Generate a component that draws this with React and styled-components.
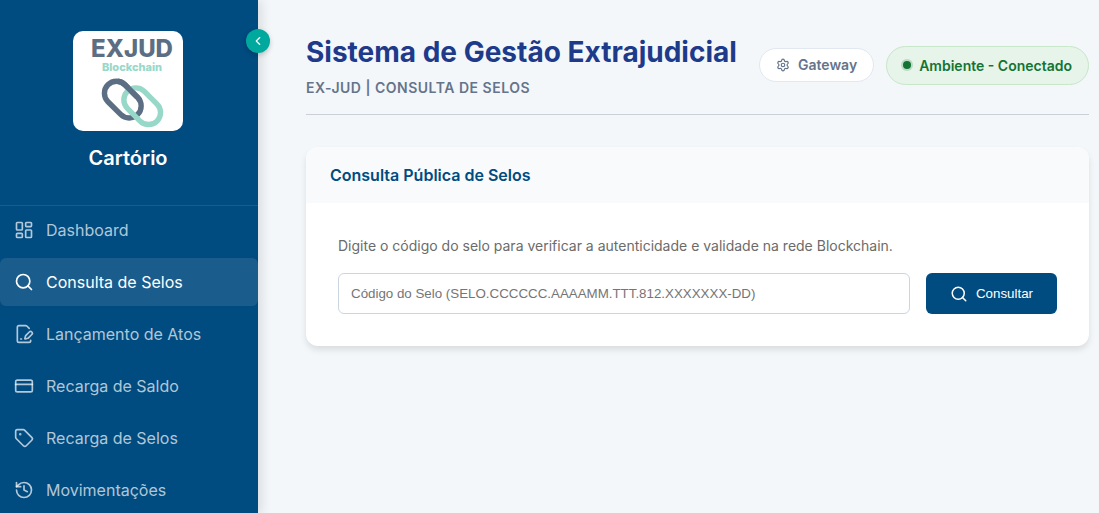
import React from 'react';
import styled, { createGlobalStyle } from 'styled-components';
import {
  LayoutDashboard,
  Search,
  FilePenLine,
  CreditCard,
  Tag,
  History,
  ChevronLeft,
  Settings,
} from 'lucide-react';

const GlobalStyle = createGlobalStyle`
  *, *::before, *::after { box-sizing: border-box; }
  body {
    margin: 0;
    background: #f3f7fa;
    font-family: Inter, "Liberation Sans", sans-serif;
  }
`;

const Shell = styled.div`
  display: flex;
  min-height: 100vh;
`;

const Sidebar = styled.aside`
  position: relative;
  flex: 0 0 258px;
  background: #004b80;
  box-shadow: 4px 0 10px rgba(0, 0, 0, 0.1);
`;

const Brand = styled.div`
  display: flex;
  flex-direction: column;
  align-items: center;
  gap: 12px;
  padding: 31px 18px 32px 16px;
  border-bottom: 1px solid rgba(255, 255, 255, 0.1);
`;

const Logo = styled.svg`
  width: 110px;
  height: 100px;
  border-radius: 10px;
  background: #fff;
`;

const BrandName = styled.h2`
  margin: 0;
  color: #fff;
  font-size: 20px;
  font-weight: 600;
  line-height: 30px;
`;

const CollapseButton = styled.button`
  position: absolute;
  top: 29px;
  right: -12px;
  display: flex;
  align-items: center;
  justify-content: center;
  width: 24px;
  height: 24px;
  padding: 0;
  border: 0;
  border-radius: 50%;
  background: #00a99d;
  color: #fff;
  box-shadow: 0 2px 5px rgba(0, 0, 0, 0.2);
  cursor: pointer;
`;

const Nav = styled.nav`
  display: flex;
  flex-direction: column;
  gap: 4px;
`;

const NavLink = styled.a`
  display: flex;
  align-items: center;
  gap: 12px;
  height: 48px;
  padding: 0 14px;
  border-radius: 6px;
  background: ${({ $active }) => ($active ? 'rgba(255, 255, 255, 0.1)' : 'transparent')};
  color: ${({ $active }) => ($active ? '#fff' : 'rgba(255, 255, 255, 0.7)')};
  font-size: 16px;
  line-height: 24px;
  text-decoration: none;
`;

const Main = styled.main`
  flex: 1;
  min-width: 0;
  padding: 32px 10px 32px 48px;
`;

const Header = styled.header`
  display: flex;
  align-items: center;
  justify-content: space-between;
  gap: 16px;
  margin-bottom: 32px;
  padding-bottom: 16px;
  border-bottom: 1px solid #cbd0d8;
`;

const Title = styled.h1`
  margin: 0;
  color: #1e3a8a;
  font-size: 28px;
  font-weight: 700;
  line-height: 40px;
`;

const Subtitle = styled.p`
  margin: 6px 0 0;
  color: #64748b;
  font-size: 14px;
  font-weight: 600;
  line-height: 20px;
  letter-spacing: 0.5px;
  text-transform: uppercase;
`;

const Actions = styled.div`
  display: flex;
  align-items: center;
  gap: 12px;
`;

const GatewayButton = styled.button`
  display: flex;
  align-items: center;
  gap: 8px;
  height: 34px;
  padding: 0 16px;
  border: 1px solid #e2e8f0;
  border-radius: 17px;
  background: #fff;
  color: #64748b;
  font: 600 14px/20px Inter, sans-serif;
  cursor: pointer;
`;

const Status = styled.div`
  display: flex;
  align-items: center;
  gap: 8px;
  height: 39px;
  padding: 0 16px;
  border: 1px solid #c8e6c9;
  border-radius: 20px;
  background: #e6f4ea;
  color: #137333;
  font-size: 14px;
  font-weight: 600;
  white-space: nowrap;
`;

const Dot = styled.span`
  width: 8px;
  height: 8px;
  border-radius: 50%;
  background: #137333;
  box-shadow: 0 0 0 2px rgba(19, 115, 51, 0.2);
`;

const Card = styled.section`
  overflow: hidden;
  border-radius: 12px;
  background: #fff;
  box-shadow: 0 4px 6px rgba(0, 0, 0, 0.1);
`;

const CardTitle = styled.h3`
  margin: 0;
  padding: 16px 24px;
  background: #f8fafc;
  color: #004b80;
  font-size: 16px;
  font-weight: 600;
  line-height: 24px;
`;

const Form = styled.form`
  padding: 32px;
`;

const Hint = styled.label`
  display: block;
  margin-bottom: 16px;
  color: #6b6b6b;
  font-size: 14px;
  line-height: 22px;
`;

const Fields = styled.div`
  display: flex;
  gap: 16px;
`;

const CodeInput = styled.input`
  flex: 1;
  min-width: 0;
  height: 41px;
  padding: 0 12px;
  border: 1px solid #cbd5e1;
  border-radius: 6px;
  background: #fff;
  font-family: "Liberation Sans", Arial, sans-serif;

  &::placeholder {
    color: #757575;
  }
`;

const SubmitButton = styled.button`
  display: flex;
  align-items: center;
  gap: 8px;
  height: 41px;
  padding: 0 24px;
  border: 0;
  border-radius: 6px;
  background: #004b80;
  color: #fff;
  font-family: "Liberation Sans", Arial, sans-serif;
  font-weight: 500;
  cursor: pointer;
`;

const items = [
  { label: 'Dashboard', icon: LayoutDashboard },
  { label: 'Consulta de Selos', icon: Search, active: true },
  { label: 'Lançamento de Atos', icon: FilePenLine },
  { label: 'Recarga de Saldo', icon: CreditCard },
  { label: 'Recarga de Selos', icon: Tag },
  { label: 'Movimentações', icon: History },
];

function ChainLink({ x, y, color, clip }) {
  return (
    <g clipPath={clip}>
      <rect
        x="-21"
        y="-12"
        width="42"
        height="24"
        rx="12"
        transform={`translate(${x} ${y}) rotate(45)`}
        fill="none"
        stroke={color}
        strokeWidth="5.4"
      />
    </g>
  );
}

function ExjudLogo() {
  return (
    <Logo viewBox="0 0 110 100" role="img" aria-label="EXJUD Blockchain">
      <defs>
        <clipPath id="front-link">
          <rect x="45" y="44" width="40" height="24" />
        </clipPath>
      </defs>
      <text x="59" y="26" textAnchor="middle" fontFamily="Inter, sans-serif" fontWeight="800" fontSize="24" fill="#5b6e83">EXJUD</text>
      <text x="59" y="40" textAnchor="middle" fontFamily="Inter, sans-serif" fontWeight="800" fontSize="11" fill="#98d8c8">Blockchain</text>
      <ChainLink x={49.8} y={68.6} color="#5b6e83" />
      <ChainLink x={69.2} y={75.2} color="#98d8c8" />
      <ChainLink x={49.8} y={68.6} color="#5b6e83" clip="url(#front-link)" />
    </Logo>
  );
}

export default function App() {
  return (
    <>
      <GlobalStyle />
      <Shell>
        <Sidebar>
          <Brand>
            <ExjudLogo />
            <BrandName>Cartório</BrandName>
          </Brand>
          <CollapseButton type="button" aria-label="Recolher menu">
            <ChevronLeft size={14} />
          </CollapseButton>
          <Nav>
            {items.map(({ label, icon: Icon, active }) => (
              <NavLink key={label} href="#" $active={active}>
                <Icon size={20} />
                {label}
              </NavLink>
            ))}
          </Nav>
        </Sidebar>
        <Main>
          <Header>
            <div>
              <Title>Sistema de Gestão Extrajudicial</Title>
              <Subtitle>EX-JUD | Consulta de Selos</Subtitle>
            </div>
            <Actions>
              <GatewayButton type="button">
                <Settings size={14} />
                Gateway
              </GatewayButton>
              <Status>
                <Dot />
                Ambiente - Conectado
              </Status>
            </Actions>
          </Header>
          <Card>
            <CardTitle>Consulta Pública de Selos</CardTitle>
            <Form onSubmit={(e) => e.preventDefault()}>
              <Hint htmlFor="codigo">
                Digite o código do selo para verificar a autenticidade e validade na rede Blockchain.
              </Hint>
              <Fields>
                <CodeInput id="codigo" placeholder="Código do Selo (SELO.CCCCCC.AAAAMM.TTT.812.XXXXXXX-DD)" />
                <SubmitButton type="submit">
                  <Search size={18} />
                  Consultar
                </SubmitButton>
              </Fields>
            </Form>
          </Card>
        </Main>
      </Shell>
    </>
  );
}
